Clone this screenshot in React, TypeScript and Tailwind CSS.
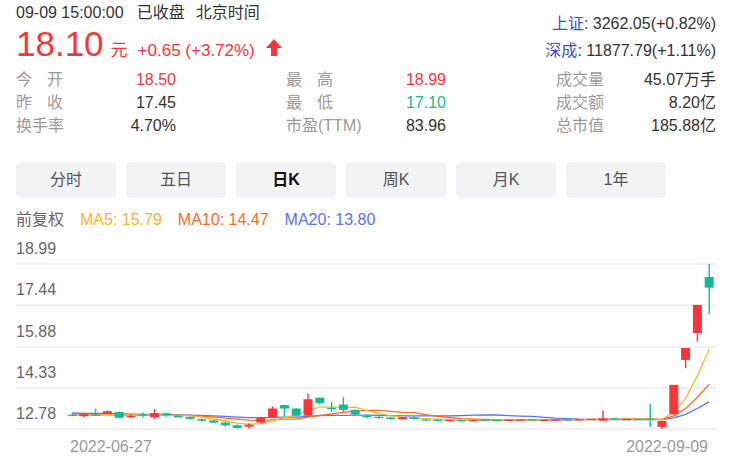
const candles: [number, number, number, number][] = [
  [13.32, 13.34, 13.26, 13.29],
  [13.26, 13.37, 13.22, 13.33],
  [13.32, 13.55, 13.28, 13.29],
  [13.35, 13.48, 13.34, 13.45],
  [13.42, 13.44, 13.19, 13.2],
  [13.25, 13.32, 13.18, 13.27],
  [13.33, 13.4, 13.2, 13.3],
  [13.22, 13.53, 13.15, 13.38],
  [13.37, 13.4, 13.24, 13.3],
  [13.28, 13.3, 13.2, 13.22],
  [13.23, 13.25, 13.13, 13.16],
  [13.15, 13.18, 13.06, 13.09],
  [13.1, 13.12, 13.0, 13.02],
  [13.02, 13.05, 12.88, 12.92],
  [12.92, 12.95, 12.8, 12.82],
  [12.87, 13.0, 12.79, 12.94],
  [13.02, 13.24, 12.99, 13.2],
  [13.22, 13.63, 13.2, 13.55],
  [13.68, 13.69, 13.25, 13.55],
  [13.55, 13.56, 13.26, 13.28],
  [13.28, 14.12, 13.26, 13.9],
  [13.96, 13.97, 13.7, 13.75],
  [13.57, 13.8, 13.43, 13.55],
  [13.7, 13.98, 13.43, 13.5],
  [13.5, 13.52, 13.3, 13.33],
  [13.27, 13.3, 13.18, 13.22],
  [13.24, 13.26, 13.16, 13.2],
  [13.21, 13.23, 13.14, 13.15],
  [13.15, 13.23, 13.14, 13.22],
  [13.22, 13.26, 13.15, 13.16],
  [13.14, 13.15, 13.09, 13.1],
  [13.13, 13.14, 13.1, 13.11],
  [13.1, 13.13, 13.09, 13.12],
  [13.12, 13.13, 13.06, 13.07],
  [13.1, 13.13, 13.09, 13.12],
  [13.13, 13.14, 13.1, 13.12],
  [13.12, 13.13, 13.1, 13.11],
  [13.11, 13.14, 13.1, 13.13],
  [13.13, 13.15, 13.12, 13.14],
  [13.14, 13.15, 13.11, 13.12],
  [13.12, 13.14, 13.11, 13.13],
  [13.13, 13.15, 13.12, 13.14],
  [13.14, 13.15, 13.12, 13.13],
  [13.13, 13.16, 13.12, 13.15],
  [13.15, 13.17, 13.14, 13.16],
  [13.1, 13.48, 13.08, 13.18],
  [13.18, 13.19, 13.14, 13.15],
  [13.15, 13.17, 13.14, 13.16],
  [13.16, 13.17, 13.14, 13.15],
  [13.17, 13.72, 12.86, 13.16],
  [12.86, 13.09, 12.78, 13.08],
  [13.34, 14.44, 13.3, 14.44],
  [15.38, 15.83, 15.07, 15.83],
  [16.39, 17.45, 16.07, 17.45],
  [18.5, 18.99, 17.1, 18.1],
];

const prior = [
  13.5, 13.48, 13.47, 13.45, 13.46, 13.44, 13.42, 13.43, 13.4, 13.38, 13.36,
  13.35, 13.33, 13.34, 13.32, 13.3, 13.31, 13.29, 13.3,
];

const RED = "#f7353a";
const GREEN = "#13bb92";

const px = (i: number) => 56 + i * 11.8;
const py = (p: number) => 32 + (18.99 - p) * 26.57;

function maPoints(n: number) {
  const all = [...prior, ...candles.map((c) => c[3])];
  return candles
    .map((_, i) => {
      const end = prior.length + i;
      let sum = 0;
      for (let k = end - n + 1; k <= end; k++) sum += all[k];
      return `${px(i).toFixed(1)},${py(sum / n).toFixed(1)}`;
    })
    .join(" ");
}

function KChart() {
  return (
    <svg className="absolute left-0 top-0" width={700} height={200} viewBox="0 0 700 200">
      <polyline points={maPoints(20)} fill="none" stroke="#5a72ee" strokeWidth={1.3} />
      <polyline points={maPoints(10)} fill="none" stroke="#fb6b22" strokeWidth={1.3} />
      <polyline points={maPoints(5)} fill="none" stroke="#fdb42a" strokeWidth={1.3} />
      {candles.map(([o, h, l, c], i) => {
        const color = c >= o ? RED : GREEN;
        const x = px(i);
        const top = py(Math.max(o, c));
        const bh = Math.max(1.2, py(Math.min(o, c)) - top);
        return (
          <g key={i}>
            <line x1={x} x2={x} y1={py(h)} y2={py(l)} stroke={color} strokeWidth={1.4} />
            <rect x={x - 4.5} y={top} width={9} height={bh} fill={color} />
          </g>
        );
      })}
    </svg>
  );
}

type Cell = [string, string, string?];

const stats: Cell[][] = [
  [["今开", "18.50", "text-[#f7353a]"], ["最高", "18.99", "text-[#f7353a]"], ["成交量", "45.07万手"]],
  [["昨收", "17.45"], ["最低", "17.10", "text-[#13bb92]"], ["成交额", "8.20亿"]],
  [["换手率", "4.70%"], ["市盈(TTM)", "83.96"], ["总市值", "185.88亿"]],
];

function Label({ text }: { text: string }) {
  if (text.length === 2) {
    return (
      <span className="flex w-[47px] justify-between text-[#999]">
        <span>{text[0]}</span>
        <span>{text[1]}</span>
      </span>
    );
  }
  return <span className="text-[#999]">{text}</span>;
}

const tabs = ["分时", "五日", "日K", "周K", "月K", "1年"];
const axis = ["17.44", "15.88", "14.33", "12.78"];

export default function App() {
  return (
    <div className="w-[741px] h-[462px] overflow-hidden bg-white pl-4 pr-[25px] font-['Liberation_Sans','Noto_Sans_CJK_SC',sans-serif] text-[16px] text-[#333]">
      <header className="flex justify-between">
        <div>
          <div className="flex h-[26px] items-center">
            <span>09-09 15:00:00</span>
            <span className="ml-[13px]">已收盘</span>
            <span className="ml-[11px]">北京时间</span>
          </div>
          <div className="flex h-[36px] items-baseline text-[#f7353a]">
            <span className="text-[35px] leading-[36px]">18.10</span>
            <span className="ml-[7px] text-[17px]">元</span>
            <span className="ml-[10px] text-[17px]">+0.65 (+3.72%)</span>
            <svg className="ml-[11px] mb-[-3px]" width={16} height={17} viewBox="0 0 16 17">
              <path d="M8 0 L16 9 L11 9 L11 17 L5 17 L5 9 L0 9 Z" fill="#f7353a" />
            </svg>
          </div>
        </div>
        <div className="pt-[10px] text-right leading-[27px]">
          <div>
            <span className="text-[#3a50c4]">上证</span>: 3262.05(+0.82%)
          </div>
          <div>
            <span className="text-[#3a50c4]">深成</span>: 11877.79(+1.11%)
          </div>
        </div>
      </header>

      <div className="mt-[4px]">
        {stats.map((row, r) => (
          <div key={r} className="flex h-[23px] items-center justify-between">
            {row.map(([label, value, color]) => (
              <div key={label} className="flex w-[160px] justify-between">
                <Label text={label} />
                <span className={color ?? "text-[#333]"}>{value}</span>
              </div>
            ))}
          </div>
        ))}
      </div>

      <div className="mt-[25px] flex gap-[10px]">
        {tabs.map((t) => (
          <div
            key={t}
            className={`flex h-[36px] w-[100px] items-center justify-center rounded-[5px] bg-[#f2f3f5] ${
              t === "日K" ? "font-bold text-[#111]" : "text-[#555]"
            }`}
          >
            {t}
          </div>
        ))}
      </div>

      <div className="mt-[10px] flex h-[24px] items-center gap-[16px]">
        <span className="text-[#666]">前复权</span>
        <span className="text-[#fdb42a]">MA5: 15.79</span>
        <span className="text-[#fb6b22]">MA10: 14.47</span>
        <span className="text-[#5a72ee]">MA20: 13.80</span>
      </div>

      <div className="relative">
        <div className="flex h-[33px] items-end border-b-2 border-[#f0f0f0] pb-[4px]">
          <span className="leading-[20px] text-[#666]">18.99</span>
        </div>
        {axis.map((a) => (
          <div key={a} className="flex h-[41.25px] items-end border-b-2 border-[#f0f0f0] pb-[4px]">
            <span className="leading-[20px] text-[#666]">{a}</span>
          </div>
        ))}
        <KChart />
      </div>

      <div className="flex h-[34px] items-center justify-between pl-[54px] pr-[8px] text-[#999]">
        <span>2022-06-27</span>
        <span>2022-09-09</span>
      </div>
    </div>
  );
}
